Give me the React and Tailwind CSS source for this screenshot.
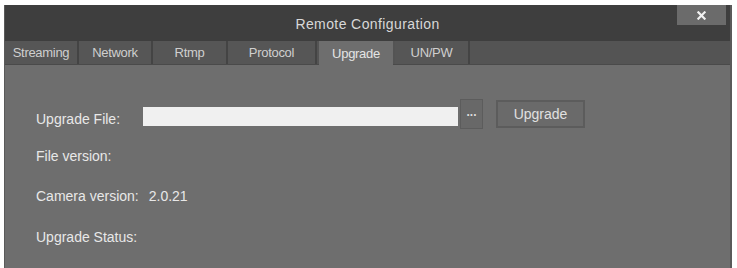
import React from "react";

const tabs = [
  { label: "Streaming", w: 74 },
  { label: "Network", w: 74 },
  { label: "Rtmp", w: 75 },
  { label: "Protocol", w: 89 },
  { label: "Upgrade", w: 74, active: true },
  { label: "UN/PW", w: 75 },
];

export default function App() {
  return (
    <div
      className="w-[737px] h-[268px] bg-white pl-[4px] pt-[5px] pr-[5px] overflow-hidden"
      style={{ fontFamily: '"Liberation Sans", Arial, sans-serif' }}
    >
      <div className="flex flex-col h-full bg-[#6e6e6e] border-l border-r-2 border-[#5a5a5a]">
        {/* Title bar */}
        <div className="relative h-[36px] bg-[#3e3e3e] flex items-center justify-center shrink-0">
          <span className="text-[14px] text-[#d8d8d8] tracking-[0.4px] mt-[3px]">Remote Configuration</span>
          <div className="absolute right-[4px] top-0 w-[49px] h-[20px] bg-[#6b6b6b] flex items-center justify-center">
            <svg width="9" height="9" viewBox="0 0 10 10">
              <path d="M1.5 1.5 L8.5 8.5 M8.5 1.5 L1.5 8.5" stroke="#f2f2f2" strokeWidth="2.4" strokeLinecap="square" />
            </svg>
          </div>
        </div>
        {/* Tabs */}
        <div className="h-[24px] bg-[#545454] flex shrink-0 border-b border-[#4a4a4a]">
          {tabs.map((t) => (
            <div
              key={t.label}
              style={{ width: t.w }}
              className={
                t.active
                  ? "h-[25px] bg-[#6e6e6e] flex items-center justify-center text-[13px] text-[#e4e4e4] tracking-[-0.3px] mx-[2px]"
                  : "h-full bg-[#565656] flex items-center justify-center text-[13px] text-[#cfcfcf] tracking-[-0.3px] border-r-2 border-[#444444]"
              }
            >
              {t.label}
            </div>
          ))}
        </div>
        {/* Content */}
        <div className="flex flex-col pl-[31px] pt-[35px] text-[14px] text-[#e8e8e8]">
          <div className="flex items-center h-[28px]">
            <span className="w-[107px] pt-[10px]">Upgrade File:</span>
            <div className="w-[315px] h-[19px] bg-[#f0f0f0] mt-[4px]" />
            <div className="ml-[2px] w-[23px] h-[30px] mt-[-1px] bg-[#686868] border border-[#5c5c5c] flex items-center justify-center text-[#dcdcdc] text-[12px] font-bold pb-[4px]">
              ...
            </div>
            <div className="ml-[13px] w-[89px] h-[28px] bg-[#6a6a6a] border-2 border-[#5c5c5c] flex items-center justify-center text-[#e0e0e0] text-[14px]">
              Upgrade
            </div>
          </div>
          <div className="h-[24px] mt-[16px] flex items-center">File version:</div>
          <div className="h-[24px] mt-[16px] flex items-center">
            <span>Camera version:</span>
            <span className="ml-[10px]">2.0.21</span>
          </div>
          <div className="h-[24px] mt-[17px] flex items-center">Upgrade Status:</div>
        </div>
      </div>
    </div>
  );
}
